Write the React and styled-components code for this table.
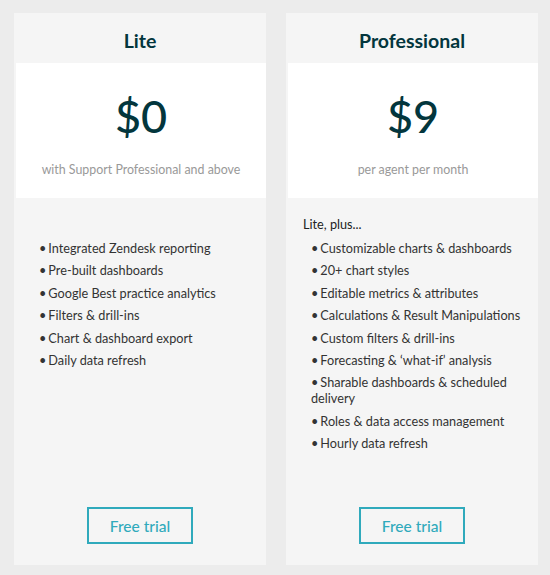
import React from "react";
import styled, { createGlobalStyle } from "styled-components";

const Global = createGlobalStyle`
  html, body { margin: 0; padding: 0; background: #ececec; }
  body { font-family: Lato, "Open Sans", sans-serif; }
`;

const Page = styled.div`
  display: flex;
  gap: 20px;
  padding: 13px 12px 10px 14px;
`;

const Card = styled.div`
  width: 252px;
  height: 552px;
  background: #f5f5f5;
  display: flex;
  flex-direction: column;
`;

const Header = styled.div`
  height: 50px;
  display: flex;
  align-items: center;
  justify-content: center;
  font-family: Lato, sans-serif;
  font-weight: 700;
  font-size: 19.5px;
  color: #03363d;
  padding-top: 5px;
  box-sizing: border-box;
`;

const PriceBox = styled.div`
  margin-left: 2px;
  height: 135px;
  background: #fff;
  display: flex;
  flex-direction: column;
  align-items: center;
`;

const Price = styled.div`
  margin-top: 25px;
  font-family: Lato, sans-serif;
  font-size: 45px;
  font-weight: 500;
  line-height: 56px;
  color: #03363d;
`;

const Note = styled.div`
  margin-top: 18px;
  font-size: 12.4px;
  color: #999;
`;

const Body = styled.div`
  flex: 1;
  display: flex;
  flex-direction: column;
  padding: 18px 17px 21px 17px;
  color: #333;
  font-size: 12.7px;
`;

const Intro = styled.div`
  line-height: 16px;
  margin-bottom: 8px;
  color: #222;
`;

const List = styled.ul`
  list-style: none;
  margin: 0 -9px 0 0;
  padding: 0 0 0 8px;
`;

const Item = styled.li`
  line-height: 16px;
  margin-bottom: 6.4px;
  &::before { content: "•"; margin-right: 2px; }
`;

const Button = styled.button`
  margin: auto auto 0;
  width: 106px;
  height: 37px;
  border: 2px solid #30aabc;
  background: transparent;
  color: #30aabc;
  font-family: Lato, sans-serif;
  font-size: 15.5px;
  font-weight: 500;
  padding: 0;
`;

const plans = [
  {
    name: "Lite",
    price: "$0",
    note: "with Support Professional and above",
    intro: "\u00a0",
    items: [
      "Integrated Zendesk reporting",
      "Pre-built dashboards",
      "Google Best practice analytics",
      "Filters & drill-ins",
      "Chart & dashboard export",
      "Daily data refresh",
    ],
  },
  {
    name: "Professional",
    price: "$9",
    note: "per agent per month",
    intro: "Lite, plus...",
    items: [
      "Customizable charts & dashboards",
      "20+ chart styles",
      "Editable metrics & attributes",
      "Calculations & Result Manipulations",
      "Custom filters & drill-ins",
      "Forecasting & \u2018what-if\u2019 analysis",
      "Sharable dashboards & scheduled delivery",
      "Roles & data access management",
      "Hourly data refresh",
    ],
  },
];

export default function App() {
  return (
    <>
      <Global />
      <Page>
        {plans.map((p) => (
          <Card key={p.name}>
            <Header>{p.name}</Header>
            <PriceBox>
              <Price>{p.price}</Price>
              <Note>{p.note}</Note>
            </PriceBox>
            <Body>
              <Intro>{p.intro}</Intro>
              <List>
                {p.items.map((it) => (
                  <Item key={it}>{it}</Item>
                ))}
              </List>
              <Button>Free trial</Button>
            </Body>
          </Card>
        ))}
      </Page>
    </>
  );
}
